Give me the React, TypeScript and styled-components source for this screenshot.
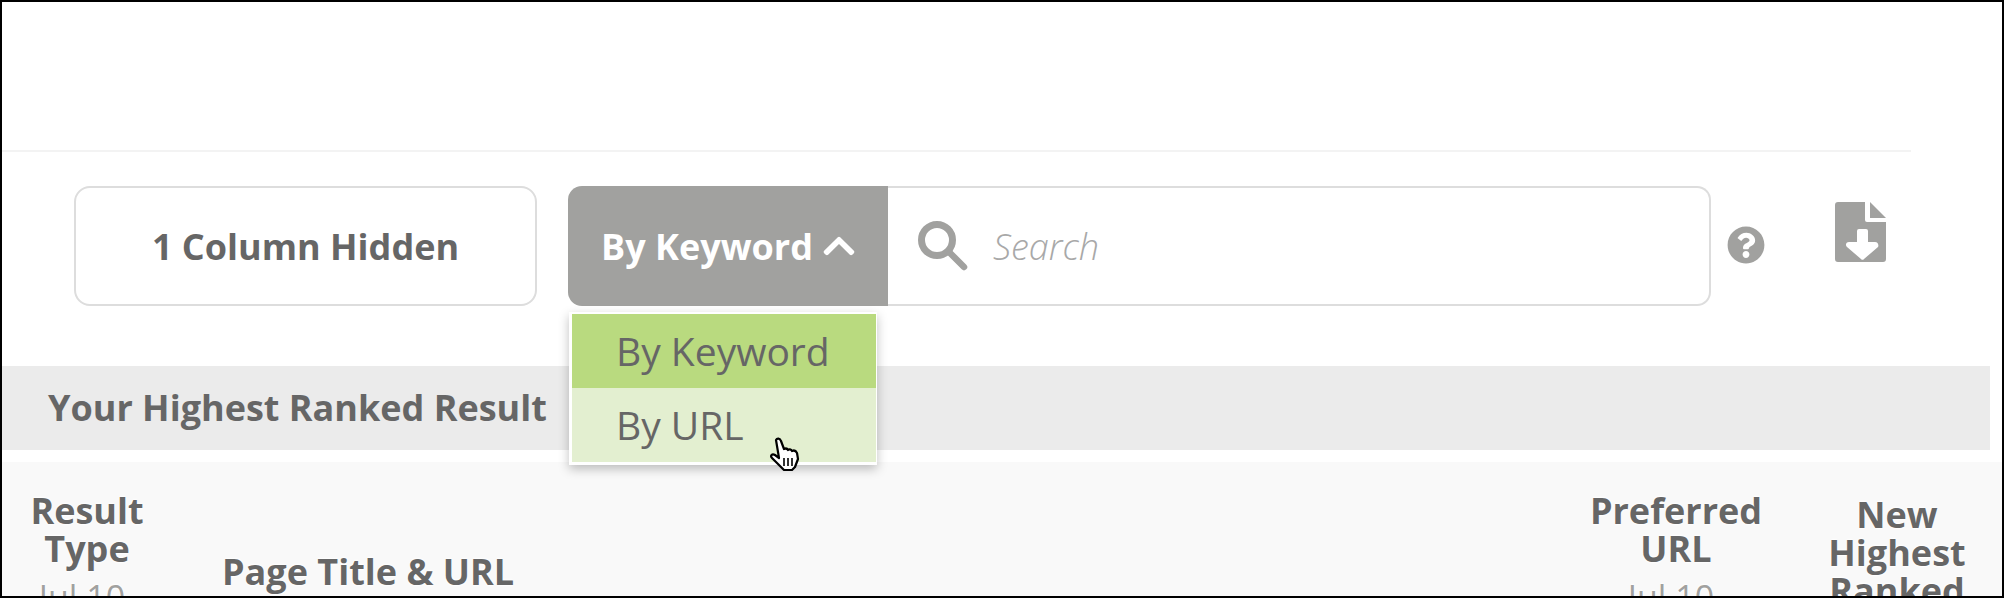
import styled, { createGlobalStyle } from "styled-components";
import { FaChevronUp, FaQuestionCircle } from "react-icons/fa";

const GlobalStyle = createGlobalStyle`
  html, body {
    margin: 0;
    padding: 0;
    background: #ffffff;
  }
  * {
    box-sizing: border-box;
  }
`;

const Frame = styled.div`
  position: relative;
  width: 2004px;
  height: 598px;
  border: 2px solid #000000;
  overflow: hidden;
  font-family: "Open Sans", sans-serif;
  color: #666666;
  background: #ffffff;
`;

const Divider = styled.div`
  width: 1909px;
  height: 2px;
  margin-top: 148px;
  background: #f3f3f3;
`;

const Toolbar = styled.div`
  display: flex;
  align-items: flex-start;
  height: 120px;
  margin-top: 34px;
  padding-left: 72px;
`;

const ColumnsButton = styled.button`
  width: 463px;
  height: 120px;
  border: 2px solid #dddddd;
  border-radius: 16px;
  background: #ffffff;
  font-family: inherit;
  font-size: 36px;
  font-weight: 700;
  color: #666666;
`;

const SearchGroup = styled.div`
  display: flex;
  width: 1143px;
  height: 120px;
  margin-left: 31px;
`;

const ModeButton = styled.button`
  display: flex;
  align-items: center;
  justify-content: center;
  gap: 8px;
  width: 320px;
  height: 120px;
  padding: 0 0 0 2px;
  border: 0;
  border-radius: 14px 0 0 14px;
  background: #a1a19f;
  font-family: inherit;
  font-size: 36px;
  font-weight: 700;
  color: #ffffff;

  svg {
    width: 36px;
    height: 36px;
  }
`;

const SearchField = styled.div`
  flex: 1;
  display: flex;
  align-items: center;
  gap: 25px;
  padding-left: 30px;
  border: 2px solid #dddddd;
  border-left: 0;
  border-radius: 0 14px 14px 0;
`;

const SearchIcon = styled.svg`
  width: 50px;
  height: 50px;
`;

const SearchHint = styled.span`
  font-size: 36px;
  font-style: italic;
  font-weight: 300;
  color: #a8a8a8;
`;

const HelpIcon = styled(FaQuestionCircle)`
  width: 38px;
  height: 38px;
  margin: 40px 0 0 16px;
  color: #a1a19f;
`;

const FileIcon = styled.svg`
  width: 51px;
  height: 60px;
  margin: 16px 0 0 70px;
`;

const Dropdown = styled.ul`
  position: absolute;
  left: 567px;
  top: 310px;
  width: 308px;
  margin: 0;
  padding: 2px 1px 3px 3px;
  list-style: none;
  background: #ffffff;
  box-shadow: 0 4px 10px rgba(0, 0, 0, 0.25);
  z-index: 2;
`;

const DropdownItem = styled.li<{ $active?: boolean }>`
  height: 74px;
  padding-left: 44px;
  font-size: 39px;
  line-height: 74px;
  color: #666666;
  background: ${(p) => (p.$active ? "#b9da7f" : "#e3efd0")};
`;

const Cursor = styled.svg`
  position: absolute;
  left: 767px;
  top: 435px;
  width: 32px;
  height: 35px;
  z-index: 3;
`;

const SectionBand = styled.div`
  height: 84px;
  width: 1988px;
  margin-top: 60px;
  padding-left: 46px;
  background: #ebebeb;
  font-size: 36px;
  font-weight: 700;
  line-height: 84px;
`;

const TableHead = styled.div`
  display: grid;
  grid-template-columns: 170px 1353px 302px 140px 1fr;
  height: 200px;
  margin-top: 12px;
  background: #f9f9f9;
  overflow: hidden;
`;

const HeadCell = styled.div<{ $top: number; $left?: boolean }>`
  padding-top: ${(p) => p.$top}px;
  padding-left: ${(p) => (p.$left ? "50px" : "0")};
  font-size: 36px;
  font-weight: 700;
  line-height: 38px;
  text-align: ${(p) => (p.$left ? "left" : "center")};
  text-shadow: 0 1px 2px #ffffff, 0 -1px 2px #ffffff;
`;

const DateLabel = styled.div`
  margin-top: 10px;
  padding-right: 10px;
  font-size: 34px;
  font-weight: 400;
  color: #a1a19f;
`;

export default function App() {
  return (
    <>
      <GlobalStyle />
      <Frame>
        <Divider />
        <Toolbar>
          <ColumnsButton>1 Column Hidden</ColumnsButton>
          <SearchGroup>
            <ModeButton>
              By Keyword
              <FaChevronUp />
            </ModeButton>
            <SearchField>
              <SearchIcon viewBox="0 0 50 50" fill="none" stroke="#a1a19f">
                <circle cx="19" cy="19" r="15.5" strokeWidth="7" />
                <path d="M32 32l14 14" strokeWidth="6.5" strokeLinecap="round" />
              </SearchIcon>
              <SearchHint>Search</SearchHint>
            </SearchField>
          </SearchGroup>
          <HelpIcon />
          <FileIcon viewBox="0 0 51 60">
            <path
              fill="#a1a19f"
              d="M3 0h27v18a2 2 0 0 0 2 2h19v37a3 3 0 0 1-3 3H3a3 3 0 0 1-3-3V3a3 3 0 0 1 3-3z"
            />
            <path fill="#a1a19f" d="M35 0l16 16H35z" />
            <path
              fill="#ffffff"
              d="M22 29a2 2 0 0 1 2-2h7a2 2 0 0 1 2 2v11h7c3 0 4 3 3 5L29 57a2 2 0 0 1-3 0L12 45c-2-2-1-5 2-5h8z"
            />
          </FileIcon>
        </Toolbar>
        <SectionBand>Your Highest Ranked Result</SectionBand>
        <TableHead>
          <HeadCell $top={30}>
            Result
            <br />
            Type
            <DateLabel>Jul 10</DateLabel>
          </HeadCell>
          <HeadCell $top={91} $left>
            Page Title &amp; URL
          </HeadCell>
          <HeadCell $top={30}>
            Preferred
            <br />
            URL
            <DateLabel>Jul 10</DateLabel>
          </HeadCell>
          <HeadCell $top={34}>
            New
            <br />
            Highest
            <br />
            Ranked
          </HeadCell>
        </TableHead>
        <Dropdown>
          <DropdownItem $active>By Keyword</DropdownItem>
          <DropdownItem>By URL</DropdownItem>
        </Dropdown>
        <Cursor viewBox="0 0 32 35">
          <path
            fill="#ffffff"
            stroke="#000000"
            strokeWidth="2.2"
            strokeLinejoin="round"
            d="M7 3c1-2 4-2 5 1l3 8c2-1 3-1 4 1 1-1 3-1 4 1 2-1 4 0 5 2l1 6-3 8-3 3H15l-3-3-9-9c-2-2 0-5 3-3l4 3z"
          />
          <path stroke="#000000" strokeWidth="1.6" d="M15 21v8M19 21v8M23 21v8" />
        </Cursor>
      </Frame>
    </>
  );
}
